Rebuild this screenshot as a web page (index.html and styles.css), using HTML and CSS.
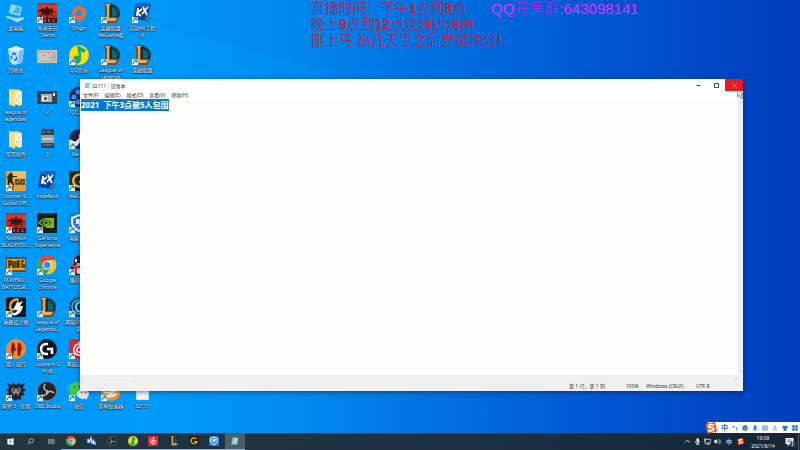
FILE: index.html
```html
<!DOCTYPE html>
<html lang="zh-CN">
<head>
<meta charset="utf-8">
<title>桌面</title>
<link rel="stylesheet" href="styles.css">
</head>
<body>
<svg class="sprite" aria-hidden="true">
  <symbol id="arrow" viewBox="0 0 20 20"><path fill="#f4f8ff" d="M0 14h6v6H0z"/><path fill="none" stroke="#3d73b4" stroke-width="1.2" d="M1.3 19q0-3 3-3M2.500 15.200h2.300v2.600"/></symbol>
  <symbol id="pc" viewBox="0 0 20 20"><path fill="#b5e3fb" d="M5 1l11 3-2 9L3 10z"/><path fill="#41b3f4" d="M6 2l9 2.600-1.600 7L4.200 9z"/><path fill="#8fd7fb" d="M6 2l5 1.400-5 6.200-1.800-.6z"/><path fill="#c9e9f9" d="M1 13l10 2 6-1 1 2-7 3L0 14z"/><path stroke="#72b8de" d="M3 13.500l8 3 6-2" fill="none"/></symbol>
  <symbol id="bin" viewBox="0 0 20 20"><path fill="#b8e2f9" d="M2 4l8-3 8 3-2 14-8 2-4-3z"/><path fill="#e8f5fc" d="M2 4l7 2 9-2-8-3z"/><path fill="#80bfe7" d="M13 6l5-2-2 14-4 1z"/><path fill="none" stroke="#1478cf" stroke-width="1.600" d="M6 10l2-2 2 2M11 12l-1 3-2 0M6 14l-1-3"/></symbol>
  <symbol id="naraka" viewBox="0 0 20 20"><path fill="#b92f25" d="M0 0h20v20H0z"/><path fill="#cf402e" d="M0 2h20v5H0z"/><path fill="#3d1312" d="M1 8l4-2 0-1 3 1 2-3 2 3 4-1-1 2 4 2-5 0 3 2-4-1-1 3-2-2-2 2-1-3-4 2 3-3zM0 15h20v5H0z"/><path fill="none" stroke="#3d1312" d="M10 9v6M7 10l-4 4M13 10l4 4"/><path fill="#c83a2d" d="M7 16h2v3H7zM11 16h2v3h-2zM15 16h3v1h-3zM15 18h3v1h-3z"/></symbol>
  <symbol id="origin" viewBox="0 0 20 20"><path fill="#ef6b35" d="M13 0l-2 3q7 1 6 8-1 6-8 9l1-3q-7-1-7-7 1-6 7-7z"/><circle cx="10" cy="10" r="3" fill="#168fe8"/></symbol>
  <symbol id="lol" viewBox="0 0 20 20"><path fill="#142b36" d="M7 1q10-1 12 8 0 5-3 7H7z"/><path fill="#17616c" d="M11 4q6 2 5 9l-5 1z"/><path fill="none" stroke="#3d5960" d="M12 2q6 3 5 9"/><path fill="#7b4e22" d="M2 0h9L9 3v11h10l-4 6H2l2-3V3z"/><path fill="#e2ac60" d="M4 1h5L8 3v12h8l-2 3H5l1-2V3z"/></symbol>
  <symbol id="kx" viewBox="0 0 20 20"><path fill="#123c9d" d="M4 0h15l-4 18-14-2z"/><path fill="#285dc5" d="M4 0h15l-1 4H3z"/><path d="M6 5l-1 8M10 6l-5 4 4 3M11 4l4 8M16 4l-6 7" fill="none" stroke="#fff" stroke-width="1.800"/><path fill="#277e96" d="M13 14h2v-2l4 3-3 5-3-2z"/></symbol>
  <symbol id="photo" viewBox="0 0 20 20"><path fill="#cfcac2" d="M0 5h20v13H0z"/><path fill="#b9b4ac" d="M1 6h18v11H1z"/><path fill="#cbc5bb" d="M2 8h13v8H2z"/><path fill="#c9786d" d="M6 10h2v1H6zM11 7h1v2h-1zM13 12h2v1h-2z"/></symbol>
  <symbol id="photo2" viewBox="0 0 20 20"><path fill="#35404a" d="M0 4h20v13H0z"/><path fill="#a7b3bb" d="M4 7h11v8H4z"/><path fill="#e5e8e8" d="M5 9h6v5H5zM16 6h2v3h-2z"/><path fill="#52616c" d="M7 10h3v3H7z"/></symbol>
  <symbol id="photo3" viewBox="0 0 20 20"><path fill="#35414c" d="M4 0h13v19H4z"/><path fill="#93a0a9" d="M4 6h13v8H4z"/><path fill="#c5c9ca" d="M5 9h11v2H5z"/><path fill="#596876" d="M5 2h3v2H5zM10 2h4v2h-4zM6 15h9v2H6z"/></symbol>
  <symbol id="qqmusic" viewBox="0 0 20 20"><circle cx="10" cy="10" r="10" fill="#f9dc12"/><path fill="#17a978" d="M8 1h2l7 4-2 3-3-2v8a4 4 0 1 1-2-3z"/></symbol>
  <symbol id="folder" viewBox="0 0 20 20"><path fill="#e8bd56" d="M3 2h9l4 2v14H3z"/><path fill="#fffdf2" d="M6 4h9v13H6z"/><path fill="#f8dc88" d="M3 2l6 3v15l-6-3z"/><path fill="#f7e7b2" d="M12 7l4-2v13l-4 1z"/><path fill="#63a576" d="M10 11l1 3h-1z"/></symbol>
  <symbol id="game" viewBox="0 0 20 20"><circle cx="10" cy="10" r="10" fill="#10295b"/><g fill="#2d9ff2"><circle cx="9" cy="5" r="2.500"/><circle cx="5" cy="10" r="2.500"/><circle cx="9" cy="15" r="2.500"/><circle cx="15" cy="10" r="3"/></g></symbol>
  <symbol id="steam" viewBox="0 0 20 20"><circle cx="10" cy="10" r="10" fill="#182654"/><path stroke="#e9effa" stroke-width="4" d="M0 12l7 3 7-8"/><circle cx="14" cy="7" r="4" fill="#e9effa"/></symbol>
  <symbol id="csgo" viewBox="0 0 20 20"><path fill="#e4a03b" d="M0 0h20v20H0z"/><path fill="#f0bd56" d="M7 0h13v7H7z"/><path fill="#232726" d="M4 2h2l1 3h4v1H7l-1 3 2 4-1 6H6l1-5-3-3-2 7H1l1-8-1-4z"/><path fill="none" stroke="#413726" stroke-width="1.500" d="M13 9h-3v4h3v-2h-1M15 9h3v4h-3z"/></symbol>
  <symbol id="wegame" viewBox="0 0 20 20"><rect width="20" height="20" rx="2" fill="#202124"/><path fill="none" stroke="#e6ba23" stroke-width="2.500" d="M15 6a6 6 0 1 0 1 5h-6"/></symbol>
  <symbol id="nvidia" viewBox="0 0 20 20"><path fill="#142017" d="M0 0h20v20H0z"/><path fill="#78b51b" d="M9 5h8v10H9z"/><path fill="#142017" d="M3 10q6-7 12 0-6 6-12 0"/><path fill="none" stroke="#78b51b" stroke-width="1.500" d="M2 10q7-8 13 0-6 6-13 0zM6 10q3-4 6 0-3 3-6 0"/></symbol>
  <symbol id="shield" viewBox="0 0 20 20"><rect width="20" height="20" rx="3" fill="#1979ed"/><path fill="#247ef2" stroke="#fff" stroke-width="2" d="M10 2l7 3v5q-1 5-7 8-6-3-7-8V5z"/><path fill="#fff" d="M7 6h7l-2 3h2l-5 6 1-4H7z"/></symbol>
  <symbol id="pubg" viewBox="0 0 20 20"><path fill="#704a1b" d="M0 2h20v15H0z"/><path fill="#e1a229" d="M1 4h18v11H1z"/><path fill="none" stroke="#38291a" stroke-width="1.500" d="M3 13V6h2v4H3M7 6v6h2V6M11 6v6h2V6h-2M11 9h2M18 6h-2v6h2v-3"/></symbol>
  <symbol id="chrome" viewBox="0 0 20 20"><circle cx="10" cy="10" r="9.500" fill="#f3c62d"/><path fill="#e64535" d="M2 5a9.500 9.500 0 0 1 16.500 0H10L7 12z"/><path fill="#37a55a" d="M2 5a9.500 9.500 0 0 0 7 14.500l5-7-7-1z"/><circle cx="10" cy="10" r="4.500" fill="#fff"/><circle cx="10" cy="10" r="3.500" fill="#4385e8"/></symbol>
  <symbol id="qq" viewBox="0 0 20 20"><path fill="#171b20" d="M5 9Q4 1 10 0q6 1 5 9l4 6-3 1-2 4H5l-2-4-2 1 1-6z"/><ellipse cx="10" cy="14" rx="5" ry="5" fill="#fff"/><path fill="#de2f35" d="M3 9q7 3 13 0v3q-5 2-8 1v5H5v-5l-3-1z"/><path fill="#fff" d="M6 4h2v3H6zM11 4h2v3h-2z"/><path fill="#efad22" d="M6 8h8l-4 2z"/></symbol>
  <symbol id="peak" viewBox="0 0 20 20"><path fill="#15171a" d="M0 0h20v20H0z"/><path fill="#f8f9f9" d="M13 1l-1 5 5-2-3 5 3 0q-1 8-10 10 4-3 4-6H7l3-6z"/><path fill="none" stroke="#e0a63a" stroke-width="2.500" d="M12 2Q4 3 4 10q0 3 4 3"/><path fill="none" stroke="#f8f9f9" stroke-width="2" d="M5 16q5 3 9-3"/></symbol>
  <symbol id="uu" viewBox="0 0 20 20"><circle cx="10" cy="10" r="10" fill="#193b63"/><circle cx="10" cy="10" r="7" fill="none" stroke="#38b9d4" stroke-width="1.500"/><path fill="none" stroke="#75e3e6" stroke-width="2" d="M13 6q-6-2-6 4t6 4"/></symbol>
  <symbol id="two" viewBox="0 0 20 20"><circle cx="10" cy="10" r="10" fill="#f18a36"/><path fill="#8f1c18" d="M6 4h2l1 3 1 5H8l-1 5H5V9zM13 5h2l1 6h-1l-1 6h-2l-1-8z"/><circle cx="7" cy="5" r="1.500" fill="#8f1c18"/><circle cx="13" cy="5" r="1.500" fill="#8f1c18"/></symbol>
  <symbol id="logi" viewBox="0 0 20 20"><circle cx="10" cy="10" r="10" fill="#101718"/><path fill="none" stroke="#fff" stroke-width="2.500" d="M11 5H9a5 5 0 0 0 0 10h2M10 10h5v5"/></symbol>
  <symbol id="cloud" viewBox="0 0 20 20"><rect width="20" height="20" rx="3" fill="#e42634"/><path fill="none" stroke="#fff" stroke-width="1.700" d="M13 3q-3-1-3 2l2 6q-1 4-4 1-1-4 4-4 5 0 4 5-2 4-7 3-5-2-4-7 1-3 4-4"/></symbol>
  <symbol id="witcher" viewBox="0 0 20 20"><path fill="#22262d" d="M1 2l5 2 1-3 3 3 4-3v3l5-2-2 5 3 2-3 2 2 3-4 1v4l-3-1-2 2-3-2-3 1v-4l-4-1 3-3-3-2 3-2z"/><path fill="#8d969d" d="M5 7l4 1 2 0 4-1-1 4-3 4H9l-3-4z"/><path fill="#202226" d="M6 8l3 1-1 2zM14 8l-3 1 1 2zM9 12h2v3H9z"/><path stroke="#c74b38" d="M7 6l2 2M13 6l-2 2"/></symbol>
  <symbol id="obs" viewBox="0 0 20 20"><circle cx="10" cy="10" r="9.500" fill="#22252a" stroke="#777c82"/><path fill="none" stroke="#b8bec7" stroke-width="1.500" d="M8 3q-3 6 3 7M17 12q-5-4-7 1M4 14q6 2 6-4"/></symbol>
  <symbol id="wechat" viewBox="0 0 20 20"><ellipse cx="8" cy="8" rx="8" ry="7" fill="#42cb4b"/><path fill="#42cb4b" d="M2 11v5l5-2z"/><ellipse cx="14" cy="13" rx="6" ry="5" fill="#e8eeea"/><path fill="#e8eeea" d="M16 16l2 3v-4z"/><path fill="#17632c" d="M5 5h1v2H5zM10 5h1v2h-1zM12 11h1v1h-1zM16 11h1v1h-1z"/></symbol>
  <symbol id="thunder" viewBox="0 0 20 20"><circle cx="10" cy="10" r="10" fill="#ee9226"/><path fill="#fff2d9" d="M1 10q10 3 17-5-1 6-7 8l7-1q-6 6-15 4l6-3q-6 0-8-3z"/></symbol>
  <symbol id="doc" viewBox="0 0 20 20"><path fill="#d4e0e7" d="M4 0h13v19H4z"/><path fill="#f4f7f8" d="M5 1h11v17H5z"/></symbol>
  <symbol id="note" viewBox="0 0 20 20"><path fill="#65aec2" d="M5 2l12 1-3 15-12-1z"/><path fill="#c5eaf0" d="M7 4l9 1-3 11-9-1z"/><path fill="none" stroke="#458ca1" d="M7 7l7 1M6 10l7 1M5 13l7 1"/></symbol>
  <symbol id="sogou" viewBox="0 0 20 20"><path fill="#ee5928" d="M1 3l16-3 3 16-16 4z"/><path fill="none" stroke="#fff" stroke-width="3" d="M15 5q-8-2-9 2 0 2 4 2 6 1 4 4-3 3-9 1"/></symbol>
  <symbol id="win" viewBox="0 0 20 20"><path fill="#f2f6f8" d="M1 3l8-1v8H1zM10 2l9-1v9h-9zM1 11h8v8l-8-1zM10 11h9v9l-9-1z"/></symbol>
  <symbol id="search" viewBox="0 0 20 20"><circle cx="12" cy="8" r="6" fill="none" stroke="#cbd2d8" stroke-width="2"/><path stroke="#cbd2d8" stroke-width="2" d="M8 12l-7 7"/></symbol>
  <symbol id="tasks" viewBox="0 0 20 20"><path fill="none" stroke="#aeb9c0" stroke-width="2" d="M1 2v3h12V2M1 18v-3h12v3M1 8h12v4H1zM17 2v16M15 8h4"/></symbol>
  <symbol id="wave" viewBox="0 0 20 20"><path fill="#172f69" d="M1 2h17v16H1z"/><path fill="none" stroke="#d8e6ff" stroke-width="2.500" d="M2 14V6l3 6 3-8 2 10 3-5v7M16 11v7"/></symbol>
  <symbol id="green" viewBox="0 0 20 20"><circle cx="10" cy="10" r="10" fill="#ead51d"/><path fill="#18a767" d="M8 2h3l4 4-1 3-2-1v5l3 4-8 2-3-3 4-5z"/></symbol>
  <symbol id="mic" viewBox="0 0 20 20"><rect x="7" y="1" width="7" height="12" rx="3" fill="currentColor"/><path fill="none" stroke="currentColor" stroke-width="2" d="M4 9q0 7 6 7t6-7M10 15v4M6 19h9"/></symbol>
  <symbol id="net" viewBox="0 0 20 20"><path fill="none" stroke="currentColor" stroke-width="2" d="M5 4h14v10H7M12 14v4M8 18h9M1 2h4v6H1zM3 8v8h4"/></symbol>
  <symbol id="vol" viewBox="0 0 20 20"><path fill="currentColor" d="M0 7h3l5-4v14l-5-4H0z"/><path fill="none" stroke="currentColor" stroke-width="1.500" d="M10 7q3 3 0 6M13 4q6 6 0 12M16 2q7 8 0 16"/></symbol>
  <symbol id="up" viewBox="0 0 20 20"><path fill="none" stroke="currentColor" stroke-width="2.500" d="M3 13l7-7 7 7"/></symbol>
  <symbol id="notice" viewBox="0 0 20 20"><path fill="#f2f5f7" d="M1 2h16v12H9l-4 5v-5H1z"/><path stroke="#536471" stroke-width="1.500" d="M4 6h10M4 9h10"/><circle cx="15" cy="14" r="5" fill="#2d3b49" stroke="#9ca7af"/><path stroke="#fff" stroke-width="1.500" d="M15 11v6"/></symbol>
  <symbol id="punct" viewBox="0 0 20 20"><path fill="currentColor" d="M3 3h5v5H3zM14 9h4v4q0 4-4 5l1-5h-1z"/></symbol>
  <symbol id="smile" viewBox="0 0 20 20"><circle cx="10" cy="10" r="9" fill="currentColor"/><path stroke="#fff" stroke-width="2" fill="none" d="M5 7h3M12 7h3M5 11q5 6 10 0"/></symbol>
  <symbol id="keys" viewBox="0 0 20 20"><path fill="none" stroke="currentColor" stroke-width="2" d="M1 3h18v14H1zM4 7h12M4 10h12M6 14h8"/></symbol>
  <symbol id="person" viewBox="0 0 20 20"><circle cx="10" cy="6" r="5" fill="currentColor"/><path fill="currentColor" d="M2 19q0-8 8-8t8 8z"/></symbol>
  <symbol id="shirt" viewBox="0 0 20 20"><path fill="currentColor" d="M6 2q4 4 8 0l6 4-3 5-2-1v9H5v-9l-2 1-3-5z"/></symbol>
  <symbol id="apps" viewBox="0 0 20 20"><path fill="currentColor" d="M1 1h8v8H1zM11 1h8v8h-8zM1 11h8v8H1zM11 11h8v8h-8z"/></symbol>
</svg>

<main class="desktop">
  <svg class="beam" viewBox="0 0 800 450" preserveAspectRatio="none" aria-hidden="true">
    <defs><linearGradient id="shade"><stop offset="0" stop-color="#0060c8" stop-opacity="0"/><stop offset=".35" stop-color="#0060c8" stop-opacity=".1"/><stop offset="1" stop-color="#0060c8" stop-opacity="0"/></linearGradient></defs>
    <path fill="url(#shade)" d="M60 0L350 80H700V0z"/>
  </svg>
  <nav class="shortcuts" aria-label="桌面图标">
    <a class="row-start" href="#"><svg><use href="#pc"/></svg><span>此电脑</span></a>
    <a href="#"><svg><use href="#naraka"/><use href="#arrow"/></svg><span>永劫无间<br>Demo</span></a>
    <a href="#"><svg><use href="#origin"/><use href="#arrow"/></svg><span>Origin</span></a>
    <a href="#"><svg><use href="#lol"/><use href="#arrow"/></svg><span>英雄联盟<br>WeGame版</span></a>
    <a href="#"><svg><use href="#kx"/><use href="#arrow"/></svg><span>启动KX工程<br>序</span></a>

    <a class="row-start" href="#"><svg><use href="#bin"/></svg><span>回收站</span></a>
    <a href="#"><svg><use href="#photo"/></svg><span>1</span></a>
    <a href="#"><svg><use href="#qqmusic"/><use href="#arrow"/></svg><span>QQ音乐</span></a>
    <a href="#"><svg><use href="#lol"/><use href="#arrow"/></svg><span>League of<br>Legends</span></a>
    <a href="#"><svg><use href="#lol"/><use href="#arrow"/></svg><span>英雄联盟</span></a>

    <a class="row-start" href="#"><svg><use href="#folder"/></svg><span>league of<br>legendskr</span></a>
    <a href="#"><svg><use href="#photo2"/></svg><span>2</span></a>
    <a href="#"><svg><use href="#game"/><use href="#arrow"/></svg><span>QQ游戏</span></a>

    <a class="row-start" href="#"><svg><use href="#folder"/></svg><span>常用软件</span></a>
    <a href="#"><svg><use href="#photo3"/></svg><span>3</span></a>
    <a href="#"><svg><use href="#steam"/><use href="#arrow"/></svg><span>Steam</span></a>

    <a class="row-start" href="#"><svg><use href="#csgo"/><use href="#arrow"/></svg><span>Counter-S...<br>Global Off...</span></a>
    <a href="#"><svg><use href="#kx"/></svg><span>kxdefault</span></a>
    <a href="#"><svg><use href="#wegame"/><use href="#arrow"/></svg><span>WeGame</span></a>

    <a class="row-start" href="#"><svg><use href="#naraka"/><use href="#arrow"/></svg><span>NARAKA<br>BLADEPOI...</span></a>
    <a href="#"><svg><use href="#nvidia"/><use href="#arrow"/></svg><span>GeForce<br>Experience</span></a>
    <a href="#"><svg><use href="#shield"/><use href="#arrow"/></svg><span>电脑管家</span></a>

    <a class="row-start" href="#"><svg><use href="#pubg"/><use href="#arrow"/></svg><span>PLAYERU...<br>BATTLEGR...</span></a>
    <a href="#"><svg><use href="#chrome"/><use href="#arrow"/></svg><span>Google<br>Chrome</span></a>
    <a href="#"><svg><use href="#qq"/><use href="#arrow"/></svg><span>腾讯QQ</span></a>

    <a class="row-start" href="#"><svg><use href="#peak"/><use href="#arrow"/></svg><span>巅峰设计图</span></a>
    <a href="#"><svg><use href="#lol"/><use href="#arrow"/></svg><span>League of<br>Legends...</span></a>
    <a href="#"><svg><use href="#uu"/><use href="#arrow"/></svg><span>网易UU加速<br>器</span></a>

    <a class="row-start" href="#"><svg><use href="#two"/><use href="#arrow"/></svg><span>双人成行</span></a>
    <a href="#"><svg><use href="#logi"/><use href="#arrow"/></svg><span>Logitech G<br>HUB</span></a>
    <a href="#"><svg><use href="#cloud"/><use href="#arrow"/></svg><span>网易云音乐</span></a>

    <a class="row-start" href="#"><svg><use href="#witcher"/><use href="#arrow"/></svg><span>巫师 3 - 狂猎</span></a>
    <a href="#"><svg><use href="#obs"/><use href="#arrow"/></svg><span>OBS Studio</span></a>
    <a href="#"><svg><use href="#wechat"/><use href="#arrow"/></svg><span>微信</span></a>
    <a href="#"><svg><use href="#thunder"/><use href="#arrow"/></svg><span>雷神加速器</span></a>
    <a href="#"><svg><use href="#doc"/></svg><span>32111</span></a>
  </nav>

  <div class="notice">
    <p class="schedule">直播时间：下午<b>1</b>点到<b>8</b>点<br>晚上<b>9</b>点到<b>12</b>点烧烤店烤串<br>刚上马 热几天手之后尝试冲分<b>!</b></p>
    <p class="group"><b>QQ</b>开黑群<b>:643098141</b></p>
  </div>

  <section class="window" aria-label="记事本">
    <header class="titlebar">
      <svg><use href="#note"/></svg>
      <h1>32111 - 记事本</h1>
      <button type="button" aria-label="最小化"><svg viewBox="0 0 10 10"><path d="M1 5h8"/></svg></button>
      <button type="button" aria-label="最大化"><svg viewBox="0 0 10 10"><path d="M1 1h8v8H1z"/></svg></button>
      <button class="close" type="button" aria-label="关闭"><svg viewBox="0 0 10 10"><path d="M1 1l8 8M9 1L1 9"/></svg></button>
    </header>
    <nav class="menus" aria-label="菜单">
      <button type="button">文件(F)</button><button type="button">编辑(E)</button><button type="button">格式(O)</button><button type="button">查看(V)</button><button type="button">帮助(H)</button>
    </nav>
    <div class="editor">
      <textarea id="text" aria-label="文本编辑器" spellcheck="false">2021  下午3点被5人包围</textarea>
      <div class="track down" aria-hidden="true"><svg><use href="#up"/></svg><svg class="flip"><use href="#up"/></svg></div>
      <div class="track across" aria-hidden="true"><svg class="left"><use href="#up"/></svg><i></i><svg class="right"><use href="#up"/></svg></div>
    </div>
    <footer class="status"><span class="place">第 1 行，第 1 列</span><span class="scale">100%</span><span class="ending">Windows (CRLF)</span><span class="coding">UTF-8</span></footer>
  </section>

  <aside class="ime" aria-label="输入法">
    <svg class="logo"><use href="#sogou"/></svg>
    <b>中</b><svg><use href="#punct"/></svg><svg><use href="#smile"/></svg><svg><use href="#mic"/></svg><svg><use href="#keys"/></svg><svg class="pale"><use href="#person"/></svg><svg><use href="#shirt"/></svg><svg><use href="#apps"/></svg>
  </aside>
  <svg class="cursor" viewBox="0 0 12 18" aria-hidden="true"><path d="M1 1v13l3-3 3 6 3-1-3-6h4z"/></svg>
</main>

<footer class="taskbar">
  <nav class="apps" aria-label="任务栏">
    <button type="button" aria-label="开始"><svg><use href="#win"/></svg></button>
    <button type="button" aria-label="搜索"><svg><use href="#search"/></svg></button>
    <button type="button" aria-label="任务视图"><svg><use href="#tasks"/></svg></button>
    <button class="open" type="button" aria-label="Chrome"><svg><use href="#chrome"/></svg></button>
    <button class="open" type="button" aria-label="音频"><svg><use href="#wave"/></svg></button>
    <button class="open" type="button" aria-label="OBS"><svg><use href="#obs"/></svg></button>
    <button class="open" type="button" aria-label="QQ音乐"><svg><use href="#green"/></svg></button>
    <button class="open" type="button" aria-label="网易云音乐"><svg><use href="#cloud"/></svg></button>
    <button class="open" type="button" aria-label="英雄联盟"><svg><use href="#lol"/></svg></button>
    <button class="open" type="button" aria-label="WeGame"><svg><use href="#wegame"/></svg></button>
    <button class="open" type="button" aria-label="电脑管家"><svg><use href="#shield"/></svg></button>
    <button class="open active" type="button" aria-label="记事本"><svg><use href="#note"/></svg></button>
  </nav>
  <div class="tray">
    <svg><use href="#up"/></svg><svg><use href="#mic"/></svg><svg><use href="#net"/></svg><svg><use href="#vol"/></svg><span>中</span><svg><use href="#sogou"/></svg>
  </div>
  <time class="clock" datetime="2021-08-14T19:09">19:09<br>2021/8/14</time>
  <button class="center" type="button" aria-label="通知"><svg><use href="#notice"/></svg></button>
</footer>
<script src="main.js"></script>
</body>
</html>
```
FILE: styles.css
```css
* { box-sizing: border-box; }

body {
  margin: 0;
  height: 100vh;
  display: flex;
  flex-direction: column;
  overflow: hidden;
  font-family: "Noto Sans", "Noto Sans CJK SC", sans-serif;
  font-size: 5px;
}

button {
  border: 0;
  padding: 0;
  background: none;
  font: inherit;
  color: inherit;
}

.sprite { position: absolute; width: 0; height: 0; }

.desktop {
  position: relative;
  flex: 1;
  min-height: 0;
  background:
    linear-gradient(to right, #0099f7 0%, #009cfa 18%, #008cf0 36%, #0070e0 55%, #0055d0 76%, #0044c0 93%, #003fb7 100%);
}

.beam { position: absolute; width: 100%; height: 100%; }

.shortcuts {
  position: relative;
  width: 158px;
  display: grid;
  grid-template-columns: repeat(5, 1fr);
  grid-auto-rows: 42px;
}

.shortcuts a {
  display: flex;
  flex-direction: column;
  align-items: center;
  padding-top: 3px;
  color: #fff;
  text-align: center;
  text-decoration: none;
  line-height: 7px;
  white-space: nowrap;
  text-shadow: 0 1px 1px #001c38, 0 0 1px #001c38, 0 0 2px #002c55;
}

.shortcuts svg { width: 20px; height: 20px; margin-bottom: 2px; flex: none; }
.shortcuts .row-start { grid-column: 1; }

.notice {
  position: absolute;
  top: 0;
  left: 311px;
  display: flex;
  white-space: nowrap;
  font-family: "Liberation Sans", "Noto Sans CJK SC", sans-serif;
}

.notice p { margin: 0; }

.schedule {
  width: 180px;
  font-size: 14px;
  line-height: 16px;
  color: #a02f68;
}

.schedule b { color: #c52343; }

.group {
  font-size: 15px;
  line-height: 17px;
  font-weight: 300;
  color: #a42be8;
}

.group b { color: #e62cf5; }

.window {
  position: absolute;
  top: 79px;
  right: 57px;
  bottom: 42px;
  left: 80px;
  display: flex;
  flex-direction: column;
  background: #fff;
  color: #333;
  box-shadow: 0 1px 5px #00204c99;
}

.titlebar { display: flex; align-items: center; height: 12px; padding-left: 4px; }
.titlebar > svg { width: 7px; height: 7px; }
.titlebar h1 { flex: 1; margin: 0 0 0 1px; font-size: 5px; font-weight: 400; }
.titlebar button { display: grid; place-items: center; width: 18px; height: 12px; }
.titlebar button svg { width: 5px; height: 5px; fill: none; stroke: #444; stroke-width: 2; }
.titlebar .close { background: #e81b23; }
.titlebar .close svg { stroke: #fff; }

.menus { display: flex; gap: 6px; height: 8px; padding-left: 3px; line-height: 8px; }

.editor {
  flex: 1;
  min-height: 0;
  display: grid;
  grid-template-columns: 1fr 5px;
  grid-template-rows: 1fr 7px;
  background: #f0f0f0;
}

.editor textarea {
  display: block;
  width: 100%;
  height: 100%;
  padding: 0 1px;
  border: 0;
  outline: 0;
  resize: none;
  overflow: hidden;
  background: #fdfdfc;
  color: #222;
  font: bold 8px/12px "Noto Sans", "Noto Sans CJK SC", sans-serif;
}

.editor textarea::selection { background: #0878d0; color: #fff; }

.track { display: flex; justify-content: space-between; align-items: center; color: #9b9b9b; }
.track svg { width: 4px; height: 4px; }
.track i { width: 30px; height: 1px; margin-right: auto; margin-left: 18px; background: #fafafa; }
.down { flex-direction: column; padding: 2px 0; }
.flip { transform: rotate(180deg); }
.left { transform: rotate(-90deg); }
.right { transform: rotate(90deg); }

.status {
  display: flex;
  justify-content: flex-end;
  height: 9px;
  line-height: 8px;
  background: #f0f0f0;
}

.place { width: 57px; }
.scale { width: 20px; }
.ending { width: 50px; }
.coding { width: 47px; }

.ime {
  position: absolute;
  right: 0;
  bottom: 0;
  display: flex;
  align-items: center;
  gap: 4px;
  height: 11px;
  padding-right: 2px;
  background: #fff;
  color: #1671cc;
}

.ime b { font-size: 7px; line-height: 8px; }
.ime svg { width: 6px; height: 6px; }
.ime .logo { width: 12px; height: 12px; margin-left: -3px; }
.ime .pale { color: #b8c4ce; }

.cursor { position: absolute; top: 89px; right: 56px; width: 7px; height: 10px; fill: #fff; stroke: #222; }

.taskbar {
  display: flex;
  align-items: center;
  height: 17px;
  background: linear-gradient(to right, #223640, #1c3040 60%, #142636);
  color: #eef2f4;
}

.apps { display: flex; width: 245px; height: 100%; margin-right: auto; }
.apps button { flex: 1; display: grid; place-items: center; border-bottom: 1px solid transparent; }
.apps svg { width: 10px; height: 10px; }
.apps button:nth-child(-n+3) svg { width: 7px; height: 7px; }
.apps .open { border-bottom-color: #7bb8e6; }
.apps .active { background: #49606a; }

.tray { display: flex; align-items: center; gap: 3px; }
.tray svg { width: 7px; height: 7px; }
.tray span { font-size: 6px; line-height: 8px; margin: 0 2px; }

.clock { width: 38px; text-align: center; line-height: 8px; }
.center { display: grid; place-items: center; width: 17px; height: 100%; border-right: 1px solid #52616c; margin-right: 1px; }
.center svg { width: 10px; height: 10px; }
```
FILE: main.js
```js
const text = document.getElementById("text");
text.focus();
text.select();
```
